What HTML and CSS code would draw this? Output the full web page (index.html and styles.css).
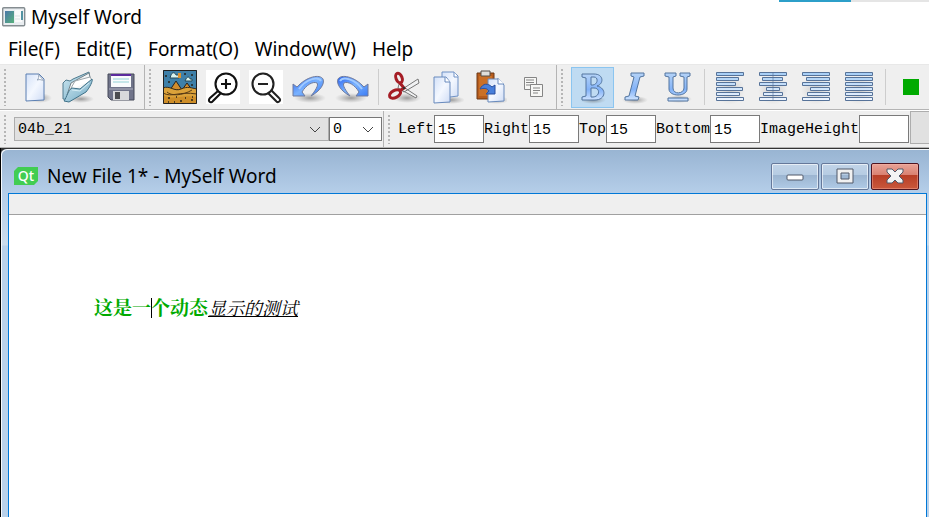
FILE: index.html
```html
<!DOCTYPE html>
<html lang="en">
<head>
<meta charset="utf-8">
<title>Myself Word</title>
<link rel="stylesheet" href="styles.css">
</head>
<body>
<svg class="defs" aria-hidden="true">
  <defs>
    <linearGradient id="page" x1="0" y1="0" x2="1" y2="1"><stop offset="0" stop-color="#d3e1f8"/><stop offset=".5" stop-color="#f4f8ff"/><stop offset="1" stop-color="#cfdcf5"/></linearGradient>
    <linearGradient id="folder" x1="0" y1="0" x2="1" y2="1"><stop offset="0" stop-color="#cfe8f1"/><stop offset="1" stop-color="#6fa9c4"/></linearGradient>
    <linearGradient id="arrow" x1="0" y1="0" x2="1" y2="1"><stop offset="0" stop-color="#2a62ee"/><stop offset=".5" stop-color="#79b2ff"/><stop offset="1" stop-color="#3b7cf5"/></linearGradient>
    <linearGradient id="glyph" x1="0" y1="0" x2="0" y2="1"><stop offset="0" stop-color="#b5d3f7"/><stop offset=".6" stop-color="#82b2f8"/><stop offset="1" stop-color="#cfe4ff"/></linearGradient>
    <linearGradient id="bars" gradientUnits="userSpaceOnUse" x1="0" y1="2" x2="0" y2="31"><stop offset="0" stop-color="#a4cdf6"/><stop offset="1" stop-color="#f0f6ff"/></linearGradient>
    <linearGradient id="app" x1="0" y1="0" x2="1" y2="1"><stop offset="0" stop-color="#4a76a8"/><stop offset="1" stop-color="#58b27c"/></linearGradient>
    <radialGradient id="shadow"><stop offset="0" stop-color="#555" stop-opacity=".55"/><stop offset="1" stop-color="#777" stop-opacity="0"/></radialGradient>
  </defs>
</svg>

<header class="titlebar">
  <svg class="app-icon" viewBox="0 0 24 20" aria-hidden="true"><rect x=".7" y=".7" width="22" height="18" rx="1" fill="#e9edf0" stroke="#858d91" stroke-width="1.4"/><rect x="3" y="4" width="9" height="12" fill="url(#app)"/><path d="M13 3h7v12h-7z" fill="#fafafa"/><path d="M19 4h2v9h-2z" fill="#5393a2"/><path d="M13 9h5M13 12h5" stroke="#dce1e1"/></svg>
  <h1>Myself Word</h1>
  <span class="progress"><span></span></span>
</header>

<nav class="menubar">
  <button>File(F)</button><button>Edit(E)</button><button>Format(O)</button><button>Window(W)</button><button>Help</button>
</nav>

<div class="toolbar-row actions">
  <div class="toolbar" role="toolbar" aria-label="File">
    <button aria-label="New"><svg viewBox="0 0 34 34"><ellipse cx="22" cy="28" rx="12" ry="5" fill="url(#shadow)"/><path d="M8 4h13l5 5v21l-18 1z" fill="url(#page)" stroke="#5b7fb2"/><path d="M20 4c1 2 1 5-1 6 3-1 5 0 7 1z" fill="#fff" stroke="#9aa9bd"/></svg></button>
    <button aria-label="Open"><svg viewBox="0 0 34 34"><ellipse cx="20" cy="29" rx="13" ry="4" fill="url(#shadow)"/><path d="M2 29 2 13l3-3 4 1 3-2 16-7 1 8-20 20z" fill="url(#folder)" stroke="#517b8e"/><path d="M6 25 10 13 28 3l2 8-19 17z" fill="#f4f6f7" stroke="#74838a"/><path d="m9 20 5-9 15-4 2 3" fill="#fff" stroke="#9da6ab"/><path d="M3 31c3-4 4-11 8-13l8 1 12-10c1 2-2 8-6 13L8 32z" fill="url(#folder)" stroke="#3e7188"/><path d="m11 20 8 1 9-8" fill="none" stroke="#d5edf5"/></svg></button>
    <button aria-label="Save"><svg viewBox="0 0 34 34"><path d="M4 4h26v26H7l-3-3z" fill="#70748a" stroke="#454858"/><path d="M7 4h20v13H7z" fill="#f9fbfc"/><path d="M7 4h20v2H7z" fill="#5b2c9d"/><path d="M9 9h16M9 12h16" stroke="#93d2d6"/><path d="M5 19h24" stroke="#aeb0be"/><path d="M9 21h16v9H9z" fill="#d8d9dc"/><path d="M11 22h5v7h-5z" fill="#4b4c50"/></svg></button>
  </div>
  <div class="toolbar" role="toolbar" aria-label="Edit">
    <button aria-label="Insert image"><svg viewBox="0 0 34 34"><path d="M0 0h34v34H0z" fill="#3e80a9"/><path d="m7 20 6-9 6 9 5-7 5 7z" fill="#d08c2c" stroke="#222"/><path d="M0 18c7-3 11 4 18 1s10-1 16 0v15H0z" fill="#dba23a" stroke="#392b18"/><path d="M0 23c9 5 15-2 34 1M4 22c4 4 15 4 25-2" fill="none" stroke="#573a15"/><path d="M0 25c10 6 17-1 34 2v7H0z" fill="#ce8e29"/><path d="M8 5c1-3 4-3 5 0h3v3H7zM23 9c1-3 4-2 4 0h2v2h-7z" fill="#d9f3ee" stroke="#244859"/><path d="M15 3h3v5h-3z" fill="#db9230"/><path d="M3 5v2M22 3v2M29 4v2M5 12h2M28 15h2M5 28h2M13 27h1M17 31h2M22 28h1M28 30h2M11 32h1M5 32h1M29 27h1" stroke="#26231b" stroke-width="1.5"/><path d="M.5.5h33v33H.5z" fill="none" stroke="#222"/></svg></button>
    <button aria-label="Zoom in"><svg viewBox="0 0 34 34"><path d="M0 0h34v34H0z" fill="#fff"/><g fill="none" stroke="#111" stroke-width="2.1"><circle cx="20" cy="14" r="10.5"/><path d="M20 9v10M15 14h10M12 21l-8 7c-3 3 1 6 3 3l8-8"/></g></svg></button>
    <button aria-label="Zoom out"><svg viewBox="0 0 34 34"><path d="M0 0h34v34H0z" fill="#fff"/><g fill="none" stroke="#222" stroke-width="2.1"><circle cx="14" cy="14" r="10.5"/><path d="M9 14h10M19 23l8 8c2 3 6-1 3-3l-8-8"/></g></svg></button>
    <button aria-label="Undo"><svg viewBox="0 0 34 34"><ellipse cx="18" cy="28" rx="16" ry="5" fill="url(#shadow)"/><path d="M1 14v12h12l-3-4c4-7 11-11 15-9 2 2-2 8-6 13 9-5 14-12 12-17C28 4 15 6 5 17z" fill="url(#arrow)" stroke="#707b9c"/><path d="M7 19C14 9 26 6 29 11" fill="none" stroke="#a0caff" stroke-width="2"/></svg></button>
    <button aria-label="Redo"><svg viewBox="0 0 34 34"><ellipse cx="16" cy="28" rx="16" ry="5" fill="url(#shadow)"/><path d="M33 14v12H21l3-4C20 15 13 11 9 13c-2 2 2 8 6 13C6 21 1 14 3 9 6 4 19 6 29 17z" fill="url(#arrow)" stroke="#707b9c"/><path d="M27 19C20 9 8 6 5 11" fill="none" stroke="#a0caff" stroke-width="2"/></svg></button>
    <span class="divider"></span>
    <button aria-label="Cut"><svg viewBox="0 0 34 34"><ellipse cx="20" cy="28" rx="14" ry="5" fill="url(#shadow)"/><path d="m12 14 18 12-1 2-18-10zM14 20 31 9l1 4-15 9z" fill="#f1f2f3" stroke="#777"/><g fill="none" stroke="#a51d25" stroke-width="3"><ellipse cx="12" cy="8" rx="3" ry="5" transform="rotate(-22 12 8)"/><ellipse cx="8" cy="24" rx="6" ry="3.5" transform="rotate(-28 8 24)"/></g><path d="m13 13 4 5-5 3" fill="none" stroke="#a51d25" stroke-width="3"/><circle cx="17" cy="18" r="1.2" fill="#333"/></svg></button>
    <button aria-label="Copy"><svg viewBox="0 0 34 34"><ellipse cx="21" cy="30" rx="14" ry="4" fill="url(#shadow)"/><path d="M12 2h12l4 4v20l-16 2z" fill="url(#page)" stroke="#6f91c5"/><path d="M24 2v5h4" fill="#fff" stroke="#6f91c5"/><path d="M4 7h12l4 5v20l-16 1z" fill="url(#page)" stroke="#688abd"/><path d="M15 7v5h5" fill="#fff" stroke="#688abd"/></svg></button>
    <button aria-label="Paste"><svg viewBox="0 0 34 34"><ellipse cx="24" cy="30" rx="12" ry="4" fill="url(#shadow)"/><path d="M4 3h17v26H4z" fill="#b75c1d" stroke="#6d3817"/><path d="M6 6h13v20H6z" fill="#ca7027"/><path d="M8 1h9v5H8z" fill="#dfdfdb" stroke="#554f48"/><path d="M15 9h11l5 6v16l-16 1z" fill="url(#page)" stroke="#688abd"/><path d="M25 8v6h6" fill="#fff" stroke="#688abd"/><path d="M7 19c3-6 8-6 12-2l3-2v9h-9l3-3c-2-3-5-3-9-2z" fill="#477fdb" stroke="#294f9f"/></svg></button>
    <button aria-label="Duplicate"><svg viewBox="0 0 34 34"><g fill="#f7f7f5" stroke="#858585"><path d="M8.500 7.500h12v12h-12z"/><path d="M14.500 14.500h12v12h-12z"/></g><path d="M10 10h8M10 12.500h8M10 15h5M17 18h7M17 20.500h7M17 23h5" stroke="#858585"/></svg></button>
  </div>
  <div class="toolbar last" role="toolbar" aria-label="Format">
    <button class="checked" aria-label="Bold" aria-pressed="true"><svg viewBox="0 0 34 34"><ellipse cx="18" cy="30" rx="13" ry="4" fill="url(#shadow)"/><path fill-rule="evenodd" d="M7 4h12c10 0 10 10 3 12 10 2 9 14-2 14H7v-3l4-1V8L7 7zM16 7v8c7 1 8-8 3-8zM16 18v9c9 1 10-9 3-9z" fill="url(#glyph)" stroke="#53759f"/></svg></button>
    <button aria-label="Italic"><svg viewBox="0 0 34 34"><ellipse cx="17" cy="30" rx="13" ry="4" fill="url(#shadow)"/><path d="M13 3h13v3l-4 1-5 19 4 1-1 3H7v-3l4-1 5-19-3-1z" fill="url(#glyph)" stroke="#53759f"/></svg></button>
    <button aria-label="Underline"><svg viewBox="0 0 34 34"><ellipse cx="18" cy="29" rx="13" ry="4" fill="url(#shadow)"/><path d="M4 3h11v3l-3 1v11c0 7 11 6 11 0V7l-4-1V3h10v3l-3 1v12c0 8-18 8-18 0V7L4 6zM7 28h20v3H7z" fill="url(#glyph)" stroke="#53759f"/></svg></button>
    <span class="divider"></span>
    <button aria-label="Align left"><svg viewBox="0 0 34 34"><ellipse cx="17" cy="20" rx="15" ry="15" fill="url(#shadow)" opacity=".45"/><path d="M3.500 2.500h27v3h-27zM3.500 7.500h22v3h-22zM3.500 12.500h19v3h-19zM3.500 17.500h26v3h-26zM3.500 22.500h23v3h-23zM3.500 27.500h27v3h-27z" fill="url(#bars)" stroke="#577399" stroke-linejoin="round"/></svg></button>
    <button aria-label="Align center"><svg viewBox="0 0 34 34"><ellipse cx="17" cy="20" rx="15" ry="15" fill="url(#shadow)" opacity=".45"/><path d="M3.500 2.500h27v3h-27zM6.500 7.500h20v3h-20zM3.500 12.500h27v3h-27zM10.500 17.500h13v3h-13zM7.500 22.500h19v3h-19zM3.500 27.500h27v3h-27z" fill="url(#bars)" stroke="#577399" stroke-linejoin="round"/><path d="M17 2v28" stroke="#577399" opacity=".6"/></svg></button>
    <button aria-label="Align right"><svg viewBox="0 0 34 34"><ellipse cx="17" cy="20" rx="15" ry="15" fill="url(#shadow)" opacity=".45"/><path d="M3.500 2.500h27v3h-27zM7.500 7.500h23v3h-23zM3.500 12.500h27v3h-27zM11.500 17.500h19v3h-19zM8.500 22.500h22v3h-22zM3.500 27.500h27v3h-27z" fill="url(#bars)" stroke="#577399" stroke-linejoin="round"/></svg></button>
    <button aria-label="Justify"><svg viewBox="0 0 34 34"><ellipse cx="17" cy="20" rx="15" ry="15" fill="url(#shadow)" opacity=".45"/><path d="M3.500 2.500h27v3h-27zM3.500 7.500h27v3h-27zM3.500 12.500h27v3h-27zM3.500 17.500h27v3h-27zM3.500 22.500h27v3h-27zM3.500 27.500h27v3h-27z" fill="url(#bars)" stroke="#577399" stroke-linejoin="round"/></svg></button>
    <span class="divider"></span>
    <button class="color" aria-label="Text color"><span class="swatch"></span></button>
  </div>
</div>

<div class="toolbar-row fields">
  <div class="toolbar" role="toolbar" aria-label="Font">
    <span class="combo family"><select aria-label="Font family"><option>04b_21</option></select><svg viewBox="0 0 12 7" aria-hidden="true"><path d="m1 1 5 5 5-5"/></svg></span>
    <span class="combo size"><select aria-label="Font size"><option>0</option></select><svg viewBox="0 0 12 7" aria-hidden="true"><path d="m1 1 5 5 5-5"/></svg></span>
  </div>
  <form class="toolbar last">
    <label for="left">Left</label><input id="left" value="15">
    <label for="right">Right</label><input id="right" value="15">
    <label for="top">Top</label><input id="top" value="15">
    <label for="bottom">Bottom</label><input id="bottom" value="15">
    <label for="height">ImageHeight</label><input id="height">
    <button class="apply" type="button" aria-label="Apply"></button>
  </form>
</div>

<main class="workspace">
  <section class="window">
    <div class="window-title">
      <span class="qt">Qt</span>
      <h2>New File 1* - MySelf Word</h2>
      <div class="window-buttons">
        <button aria-label="Minimize"><svg viewBox="0 0 20 18"><rect x="2" y="8" width="16" height="5" rx="1" fill="#fff" stroke="#515969"/></svg></button>
        <button aria-label="Maximize"><svg viewBox="0 0 20 18"><path fill-rule="evenodd" d="M2 2h16v14H2zM6 6v6h8V6z" fill="#f1f1f1" stroke="#515969"/></svg></button>
        <button class="close" aria-label="Close"><svg viewBox="0 0 20 18"><path d="M2 2h5l3 3 3-3h5v3l-4 4 4 4v3h-5l-3-3-3 3H2v-3l4-4-4-4z" fill="#f4f4f4" stroke="#515969"/></svg></button>
      </div>
    </div>
    <div class="document">
      <div class="ruler"></div>
      <div class="editor" role="textbox" aria-label="Document" aria-multiline="true" lang="zh-CN">
        <p><strong>这是一<span class="caret"></span>个动态</strong><em>显示的测试</em></p>
      </div>
    </div>
  </section>
</main>
</body>
</html>
```
FILE: styles.css
```css
* { box-sizing: border-box; }

body {
  display: flex;
  flex-direction: column;
  height: 100vh;
  margin: 0;
  overflow: hidden;
  background: #fff;
  color: #000;
  font: 19px/24px "Noto Sans", "Noto Sans CJK SC", sans-serif;
}

button, input, select { margin: 0; padding: 0; border: 0; border-radius: 0; background: none; color: inherit; font: inherit; }
h1, h2, p { margin: 0; font: inherit; }
svg { display: block; flex: none; }
.defs { position: absolute; width: 0; height: 0; }

.titlebar { position: relative; flex: none; display: flex; align-items: center; gap: 5px; height: 34px; padding-left: 2px; }
.app-icon { width: 24px; height: 20px; }
.progress { position: absolute; top: 0; right: 0; width: 150px; height: 2px; background: #e5e5e5; }
.progress span { display: block; width: 72px; height: 2px; background: #2c9fc9; }

.menubar { flex: none; display: flex; height: 30px; }
.menubar button { padding: 0 8px; white-space: nowrap; }

.toolbar-row { flex: none; display: flex; background: #efefef; border-bottom: 1px solid #b4b4b4; }
.actions { height: 46px; border-top: 1px solid #e8e8e8; }
.fields { height: 38px; border-top: 1px solid #fff; font: 15px/20px "Liberation Mono", monospace; }

.toolbar { position: relative; flex: none; display: flex; align-items: center; padding: 0 1px 0 14px; border-right: 1px solid #b4b4b4; }
.toolbar.last { flex: 1; min-width: 0; overflow: hidden; padding-right: 0; border-right: 0; }
.toolbar::before {
  content: "";
  position: absolute;
  top: 4px;
  bottom: 3px;
  left: 4px;
  width: 2px;
  background: repeating-linear-gradient(#b6b6b6 0 2px, transparent 2px 4px);
}
.actions button { flex: none; display: flex; align-items: center; width: 43px; height: 41px; padding-left: 3px; border: 1px solid transparent; }
.actions button svg { width: 34px; height: 34px; }
.actions .checked { background: #bfdbf2; border-color: #8bc5f0; }
.actions .color { flex: 1; padding-left: 12px; }
.divider { flex: none; width: 1px; height: 36px; margin: 0 4px; background: #cdcdcd; }
.swatch { flex: none; width: 16px; height: 16px; background: #00aa00; }

.combo { position: relative; display: block; height: 24px; border: 1px solid #adadad; background: #e1e1e1; }
.combo select { width: 100%; height: 100%; padding: 2px 0 0 3px; appearance: none; }
.combo svg { position: absolute; top: 8px; right: 7px; width: 12px; height: 7px; pointer-events: none; }
.combo path { fill: none; stroke: #444; }
.family { width: 315px; }
.size { width: 53px; border-color: #777; background: #fff; }

.fields label { padding-top: 2px; }
.fields input { width: 50px; height: 28px; padding: 2px 0 0 3px; border: 1px solid #7a7a7a; background: #fff; }
.apply { flex: 1; align-self: flex-end; height: 33px; margin: 0 0 3px 1px; border: 1px solid #adadad; border-right: 0; background: #e1e1e1; }

.workspace { flex: 1; display: flex; min-height: 0; border-left: 1px solid #000; background: #333; }
.window {
  flex: 1;
  display: flex;
  flex-direction: column;
  padding: 0 2px 0 7px;
  border-top: 1px solid #333;
  border-radius: 6px 0 0;
  box-shadow: inset 1px 1px #f5f9fd;
  background: linear-gradient(#98b4d2, #b5cee9 44px, #ccdcec 96px, #b9d1ea 97px);
}
.window-title { flex: none; display: flex; align-items: center; height: 44px; padding: 10px 8px 0 6px; }
.qt {
  width: 24px;
  margin-right: 9px;
  background: #41cd52;
  clip-path: polygon(4px 0, 100% 0, 100% 14px, 20px 100%, 0 100%, 0 4px);
  color: #fff;
  font-size: 14px;
  font-weight: 500;
  line-height: 18px;
  text-align: center;
}
.window-buttons { display: flex; gap: 2px; margin-left: auto; }
.window-buttons button {
  display: grid;
  place-items: center;
  width: 48px;
  height: 27px;
  border: 1px solid #65789a;
  border-radius: 2px;
  box-shadow: inset 0 0 0 1px #ffffff99;
  background: linear-gradient(#c2d4e8, #b6cce3 42%, #9bb4d0 43%, #b0cbe6);
}
.window-buttons svg { width: 20px; height: 18px; }
.window-buttons .close {
  border-color: #4d1420;
  box-shadow: inset 0 0 0 1px #ffb8a966;
  background: linear-gradient(#e8a397, #da8273 42%, #b73d26 43%, #ca583b);
}

.document { flex: 1; display: flex; flex-direction: column; border: 1px solid #0078d7; border-bottom: 0; background: #fff; }
.ruler { flex: none; height: 21px; border-bottom: 1px solid #a0a0a0; background: #efefef; }
.editor { flex: 1; padding: 80px 85px; font: 18px/24px "Noto Serif CJK SC", "Noto Sans CJK SC", serif; }
.editor strong { color: #00aa00; font-size: 19px; }
.editor em { text-decoration: underline; text-underline-offset: 1px; }
.caret { position: absolute; width: 1px; height: 20px; margin-top: 3px; background: #000; }
```
